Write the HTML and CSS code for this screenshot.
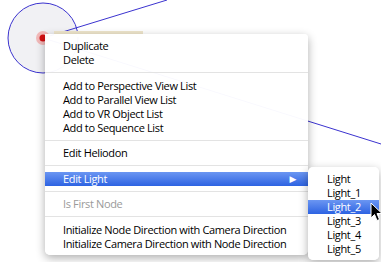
FILE: index.html
```html
<!DOCTYPE html>
<html lang="en">
<head>
    <meta charset="UTF-8">
    <title>Node Context Menu</title>
    <link rel="stylesheet" href="styles.css">
</head>
<body>
    <div class="canvas">
        <!-- scene behind the menu: node circle and its direction lines -->
        <svg class="scene" width="381" height="262" viewBox="0 0 381 262">
            <circle cx="43" cy="38" r="35" fill="#f1f1f4" stroke="#3b33cf" stroke-width="1"/>
            <line x1="43" y1="38" x2="167" y2="0" stroke="#3b33cf" stroke-width="1"/>
            <line x1="43" y1="38" x2="381" y2="144" stroke="#3b33cf" stroke-width="1"/>
            <rect x="54" y="31" width="89" height="6" fill="#efe6cc"/>
            <circle cx="43" cy="38" r="7" fill="#f2b9b9"/>
            <circle cx="43" cy="38" r="3.5" fill="#d40f12"/>
        </svg>

        <div class="menu">
            <div class="item first">Duplicate</div>
            <div class="item">Delete</div>
            <div class="sep"></div>
            <div class="item">Add to Perspective View List</div>
            <div class="item">Add to Parallel View List</div>
            <div class="item">Add to VR Object List</div>
            <div class="item">Add to Sequence List</div>
            <div class="sep"></div>
            <div class="item">Edit Heliodon</div>
            <div class="sep"></div>
            <div class="item selected">
                <span>Edit Light</span>
                <span class="arrow">&#9654;</span>
            </div>
            <div class="sep"></div>
            <div class="item disabled">Is First Node</div>
            <div class="sep"></div>
            <div class="item">Initialize Node Direction with Camera Direction</div>
            <div class="item">Initialize Camera Direction with Node Direction</div>
        </div>

        <div class="menu submenu">
            <div class="item">Light</div>
            <div class="item">Light_1</div>
            <div class="item selected">Light_2</div>
            <div class="item">Light_3</div>
            <div class="item">Light_4</div>
            <div class="item">Light_5</div>
        </div>

        <svg class="cursor" width="14" height="20" viewBox="0 0 14 20">
            <path d="M1 1 L1 16 L4.5 12.5 L7 18.5 L9.5 17.5 L7 11.5 L12 11.5 Z" fill="#000" stroke="#fff" stroke-width="1" stroke-linejoin="round"/>
        </svg>
    </div>
</body>
</html>
```

FILE: styles.css
```css
body {
    margin: 0;
    background-color: #fff;
    font-family: "Open Sans", "DejaVu Sans", sans-serif;
    font-size: 11px;
    letter-spacing: -0.35px;
    color: #000;
}
.canvas {
    position: relative;
    width: 381px;
    height: 262px;
    overflow: hidden;
}
.scene {
    position: absolute;
    left: 0;
    top: 0;
}
.menu {
    position: absolute;
    left: 45px;
    top: 34px;
    width: 263px;
    padding: 5px 0 4px;
    background-color: rgba(255, 255, 255, 0.97);
    border-radius: 0 4px 5px 5px;
    box-shadow: 0 3px 10px rgba(0, 0, 0, 0.32);
    box-sizing: border-box;
}
.item {
    display: flex;
    justify-content: space-between;
    align-items: center;
    height: 14px;
    line-height: 14px;
    padding: 0 12px 0 18px;
    white-space: nowrap;
}
.item.selected {
    background: linear-gradient(#6b96f2, #2d63e2);
    color: #fff;
}
.item.disabled {
    color: #9a9a9a;
}
.arrow {
    font-size: 9px;
}
.sep {
    height: 11.5px;
    display: flex;
    align-items: center;
}
.sep::after {
    content: "";
    flex: 1;
    height: 1px;
    background-color: #e3e3e3;
}
.submenu {
    left: 308px;
    top: 167px;
    width: 71px;
    padding: 5px 0 4px;
    border-radius: 5px;
}
.submenu .item {
    padding-left: 19px;
}
.cursor {
    position: absolute;
    left: 370px;
    top: 202px;
}
```
